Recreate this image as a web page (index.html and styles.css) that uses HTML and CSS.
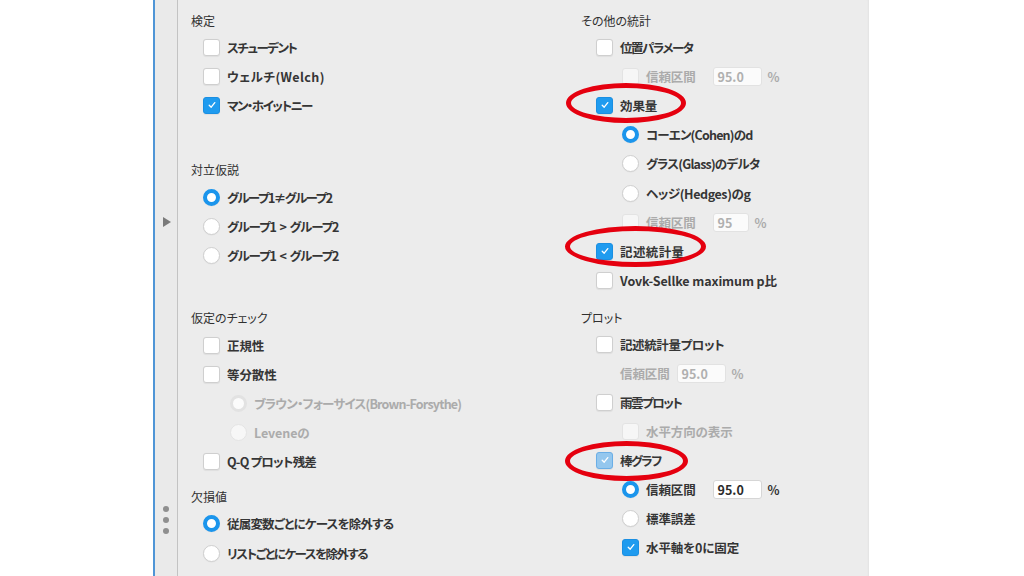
FILE: index.html
```html
<!DOCTYPE html>
<html lang="ja">
<head>
<meta charset="utf-8">
<link rel="stylesheet" href="styles.css">
</head>
<body>
<div class="stage">
  <div class="margin-left"></div>
  <div class="panel">
    <div class="sidebar">
      <span class="tri"></span>
      <div class="dots"><span></span><span></span><span></span></div>
    </div>
    <div class="content">
      <div class="col col-left">
        <div class="heading">検定</div>
        <div class="row"><span class="cb"></span><span class="lbl k1">スチューデント</span></div>
        <div class="row"><span class="cb"></span><span class="lbl wide">ウェルチ(Welch)</span></div>
        <div class="row"><span class="cb on"><svg viewBox="0 0 16 16"><path d="M5.2 8.2 L7.2 10.2 L10.8 5.6"/></svg></span><span class="lbl k1">マン・ホイットニー</span></div>

        <div class="heading h-alt">対立仮説</div>
        <div class="row"><span class="rd on"></span><span class="lbl k1">グループ1≠グループ2</span></div>
        <div class="row"><span class="rd"></span><span class="lbl k4">グループ1 &gt; グループ2</span></div>
        <div class="row"><span class="rd"></span><span class="lbl k4">グループ1 &lt; グループ2</span></div>

        <div class="heading h-check">仮定のチェック</div>
        <div class="row"><span class="cb"></span><span class="lbl">正規性</span></div>
        <div class="row"><span class="cb"></span><span class="lbl">等分散性</span></div>
        <div class="row sub"><span class="rd dis-on"></span><span class="lbl dim k2">ブラウン・フォーサイス(Brown-Forsythe)</span></div>
        <div class="row sub"><span class="rd dis"></span><span class="lbl dim">Leveneの</span></div>
        <div class="row"><span class="cb"></span><span class="lbl k2">Q-Q プロット残差</span></div>

        <div class="heading h-miss">欠損値</div>
        <div class="row"><span class="rd on"></span><span class="lbl k2">従属変数ごとにケースを除外する</span></div>
        <div class="row"><span class="rd"></span><span class="lbl k1">リストごとにケースを除外する</span></div>
      </div>

      <div class="col col-right">
        <div class="heading">その他の統計</div>
        <div class="row"><span class="cb"></span><span class="lbl k1">位置パラメータ</span></div>
        <div class="row sub"><span class="cb dis"></span><span class="lbl dim">信頼区間</span><span class="num dis">95.0</span><span class="pct dim">%</span></div>
        <div class="row mark"><span class="cb on"><svg viewBox="0 0 16 16"><path d="M5.2 8.2 L7.2 10.2 L10.8 5.6"/></svg></span><span class="lbl">効果量</span><span class="ring ring-1"></span></div>
        <div class="row sub"><span class="rd on"></span><span class="lbl k2">コーエン(Cohen)のd</span></div>
        <div class="row sub"><span class="rd"></span><span class="lbl k2">グラス(Glass)のデルタ</span></div>
        <div class="row sub"><span class="rd"></span><span class="lbl k3">ヘッジ(Hedges)のg</span></div>
        <div class="row sub"><span class="cb dis"></span><span class="lbl dim">信頼区間</span><span class="num dis short">95</span><span class="pct dim">%</span></div>
        <div class="row mark"><span class="cb on"><svg viewBox="0 0 16 16"><path d="M5.2 8.2 L7.2 10.2 L10.8 5.6"/></svg></span><span class="lbl wide">記述統計量</span><span class="ring ring-2"></span></div>
        <div class="row"><span class="cb"></span><span class="lbl">Vovk-Sellke maximum p比</span></div>

        <div class="sec-plot">
          <div class="heading h-plot">プロット</div>
          <div class="row"><span class="cb"></span><span class="lbl k3">記述統計量プロット</span></div>
          <div class="row plain"><span class="lbl dim">信頼区間</span><span class="num dis near">95.0</span><span class="pct dim">%</span></div>
          <div class="row"><span class="cb"></span><span class="lbl k1">雨雲プロット</span></div>
          <div class="row sub"><span class="cb dis"></span><span class="lbl dim">水平方向の表示</span></div>
          <div class="row mark"><span class="cb focus"><svg viewBox="0 0 16 16"><path d="M5.2 8.2 L7.2 10.2 L10.8 5.6"/></svg></span><span class="lbl k1">棒グラフ</span><span class="ring ring-3"></span></div>
          <div class="row sub"><span class="rd on"></span><span class="lbl">信頼区間</span><span class="num">95.0</span><span class="pct">%</span></div>
          <div class="row sub"><span class="rd"></span><span class="lbl">標準誤差</span></div>
          <div class="row sub"><span class="cb on"><svg viewBox="0 0 16 16"><path d="M5.2 8.2 L7.2 10.2 L10.8 5.6"/></svg></span><span class="lbl">水平軸を0に固定</span></div>
        </div>
      </div>
    </div>
  </div>
</div>
</body>
</html>
```

FILE: styles.css
```css
html, body {
  margin: 0;
  padding: 0;
  background: #ffffff;
}

body {
  font-family: "Noto Sans CJK JP", "Noto Sans", sans-serif;
  font-feature-settings: "palt";
  color: #353535;
}

.stage {
  display: flex;
  width: 1024px;
  height: 576px;
  overflow: hidden;
}

.margin-left {
  width: 153px;
  flex: none;
}

.panel {
  width: 716px;
  flex: none;
  display: flex;
  background: #ececec;
  box-shadow: inset -2px 0 2px -1px rgba(0, 0, 0, 0.04);
}

.sidebar {
  width: 22px;
  flex: none;
  border-left: 2px solid #4f95d6;
  border-right: 1px solid #c3c3c3;
  background: #eaeaea;
  display: flex;
  flex-direction: column;
  align-items: center;
}

.tri {
  width: 0;
  height: 0;
  margin-top: 217px;
  margin-left: 2px;
  border-top: 5px solid transparent;
  border-bottom: 5px solid transparent;
  border-left: 8px solid #7a7a7a;
}

.dots {
  margin-top: 279px;
  display: flex;
  flex-direction: column;
  gap: 5px;
}

.dots span {
  width: 6px;
  height: 6px;
  border-radius: 50%;
  background: #8f8f8f;
}

.content {
  flex: 1;
  display: grid;
  grid-template-columns: 390px 1fr;
  padding: 7.5px 0 0 13px;
}

.col {
  display: flex;
  flex-direction: column;
}

.heading {
  height: 25px;
  display: flex;
  align-items: center;
  font-size: 12px;
  font-weight: 400;
  color: #303030;
}

.h-alt { margin-top: 37.4px; }
.h-check { margin-top: 35.4px; }
.h-miss { margin-top: 8px; }
.h-plot { margin-top: 10.2px; }

.row {
  position: relative;
  height: 29.2px;
  display: flex;
  align-items: center;
  font-size: 12.5px;
  font-weight: 700;
}

.col-left .row { padding-left: 12px; }
.col-left .row.sub { padding-left: 39px; }
.col-right .row { padding-left: 15px; }
.col-right .row.sub { padding-left: 41px; }
.col-right .row.plain { padding-left: 39px; }
.sec-plot .row { height: 28.9px; }

.lbl {
  white-space: pre;
  letter-spacing: -0.1px;
}

.lbl.k1 { letter-spacing: -1.5px; }
.lbl.k2 { letter-spacing: -0.8px; }
.lbl.k3 { letter-spacing: -0.4px; }
.lbl.k4 { letter-spacing: -1.1px; word-spacing: 2px; }
.lbl.wide { letter-spacing: 0.4px; }

.dim { color: #ababab; }

.cb, .rd {
  flex: none;
  width: 17px;
  height: 17px;
  box-sizing: border-box;
  background: #ffffff;
  border: 1px solid #cfcfcf;
  margin-right: 7px;
  display: flex;
  align-items: center;
  justify-content: center;
  box-shadow: 0 0.5px 1px rgba(0, 0, 0, 0.06);
}

.cb { border-radius: 3px; }
.rd { border-radius: 50%; }

.cb svg {
  width: 16px;
  height: 16px;
  flex: none;
}

.cb svg path {
  fill: none;
  stroke: #ffffff;
  stroke-width: 1.3;
  stroke-linecap: round;
  stroke-linejoin: round;
}

.cb.on {
  background: #1f9bef;
  border-color: #1a8fe2;
}

.cb.focus {
  background: #94c7ee;
  border-color: #6aaee6;
}

.cb.dis {
  background: #f6f6f6;
  border-color: #e3e3e3;
  box-shadow: none;
}

.rd.on {
  border: 4px solid #1b95ec;
}

.rd.dis {
  background: #f7f7f7;
  border-color: #e4e4e4;
  box-shadow: none;
}

.rd.dis-on {
  background: #fbfbfb;
  border: 3px solid #e2e2e2;
  box-shadow: none;
}

.num {
  flex: none;
  width: 49px;
  height: 19px;
  box-sizing: border-box;
  margin-left: 17px;
  padding: 0 0 0 4px;
  background: #ffffff;
  border: 1px solid #d6d6d6;
  border-radius: 3px;
  font-size: 12.5px;
  font-weight: 700;
  line-height: 17px;
  color: #2b2b2b;
}

.num.dis {
  color: #b0b0b0;
  border-color: #e2e2e2;
  background: #fbfbfb;
}

.num.short { width: 36px; }
.num.near { margin-left: 7px; }

.pct {
  margin-left: 6px;
  font-size: 12.5px;
}

.ring {
  position: absolute;
  box-sizing: border-box;
  border: 5px solid #e5000f;
  border-radius: 50%;
  pointer-events: none;
}

.ring-1 { left: -15px; top: -8px; width: 120px; height: 40px; }
.ring-2 { left: -16px; top: -11px; width: 141px; height: 41px; }
.ring-3 { left: -16px; top: -5px; width: 123px; height: 40px; }
```
